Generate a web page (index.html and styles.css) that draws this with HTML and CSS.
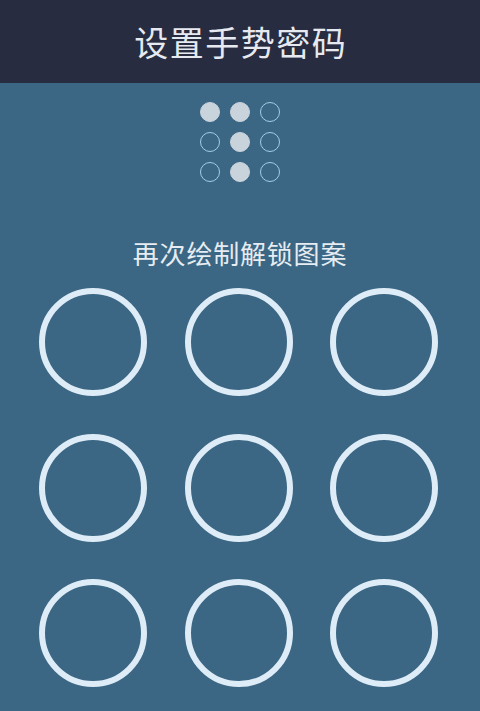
FILE: index.html
```html
<!DOCTYPE html>
<html lang="zh-CN">
<head>
<meta charset="utf-8">
<title>设置手势密码</title>
<link rel="stylesheet" href="styles.css">
</head>
<body>
<header class="topbar">
  <h1 class="title">设置手势密码</h1>
</header>
<main class="content">
  <div class="preview">
    <span class="dot on"></span><span class="dot on"></span><span class="dot"></span>
    <span class="dot"></span><span class="dot on"></span><span class="dot"></span>
    <span class="dot"></span><span class="dot on"></span><span class="dot"></span>
  </div>
  <p class="hint">再次绘制解锁图案</p>
  <div class="pad">
    <span class="node"></span><span class="node"></span><span class="node"></span>
    <span class="node"></span><span class="node"></span><span class="node"></span>
    <span class="node"></span><span class="node"></span><span class="node"></span>
  </div>
</main>
</body>
</html>
```
FILE: styles.css
```css
html, body {
  margin: 0;
  padding: 0;
  height: 100%;
}
body {
  background: #3b6784;
  font-family: "Noto Sans CJK SC", "Noto Sans", sans-serif;
  overflow: hidden;
}
.topbar {
  height: 83px;
  background: #272c40;
  display: flex;
  align-items: center;
  justify-content: center;
}
.title {
  margin: 0;
  font-size: 34px;
  font-weight: 400;
  letter-spacing: 1.5px;
  color: #e6eaf0;
  line-height: 1;
  padding-left: 1.5px;
}
.content {
  display: flex;
  flex-direction: column;
  align-items: center;
}
.preview {
  margin-top: 19px;
  display: grid;
  grid-template-columns: repeat(3, 20px);
  grid-auto-rows: 20px;
  gap: 10px;
}
.dot {
  box-sizing: border-box;
  width: 20px;
  height: 20px;
  border-radius: 50%;
  border: 1px solid #a3cde6;
}
.dot.on {
  background: #c9d3dc;
  border-color: #c9d3dc;
}
.hint {
  margin: 53px 0 0;
  font-size: 26px;
  line-height: 36px;
  letter-spacing: 0.8px;
  color: #e6ecf2;
}
.pad {
  align-self: flex-start;
  margin-top: 17px;
  padding-left: 39px;
  display: grid;
  grid-template-columns: repeat(3, 108px);
  grid-auto-rows: 108px;
  column-gap: 37.5px;
  row-gap: 37.5px;
}
.node {
  box-sizing: border-box;
  width: 108px;
  height: 108px;
  border-radius: 50%;
  border: 6px solid #deecf7;
}
```
